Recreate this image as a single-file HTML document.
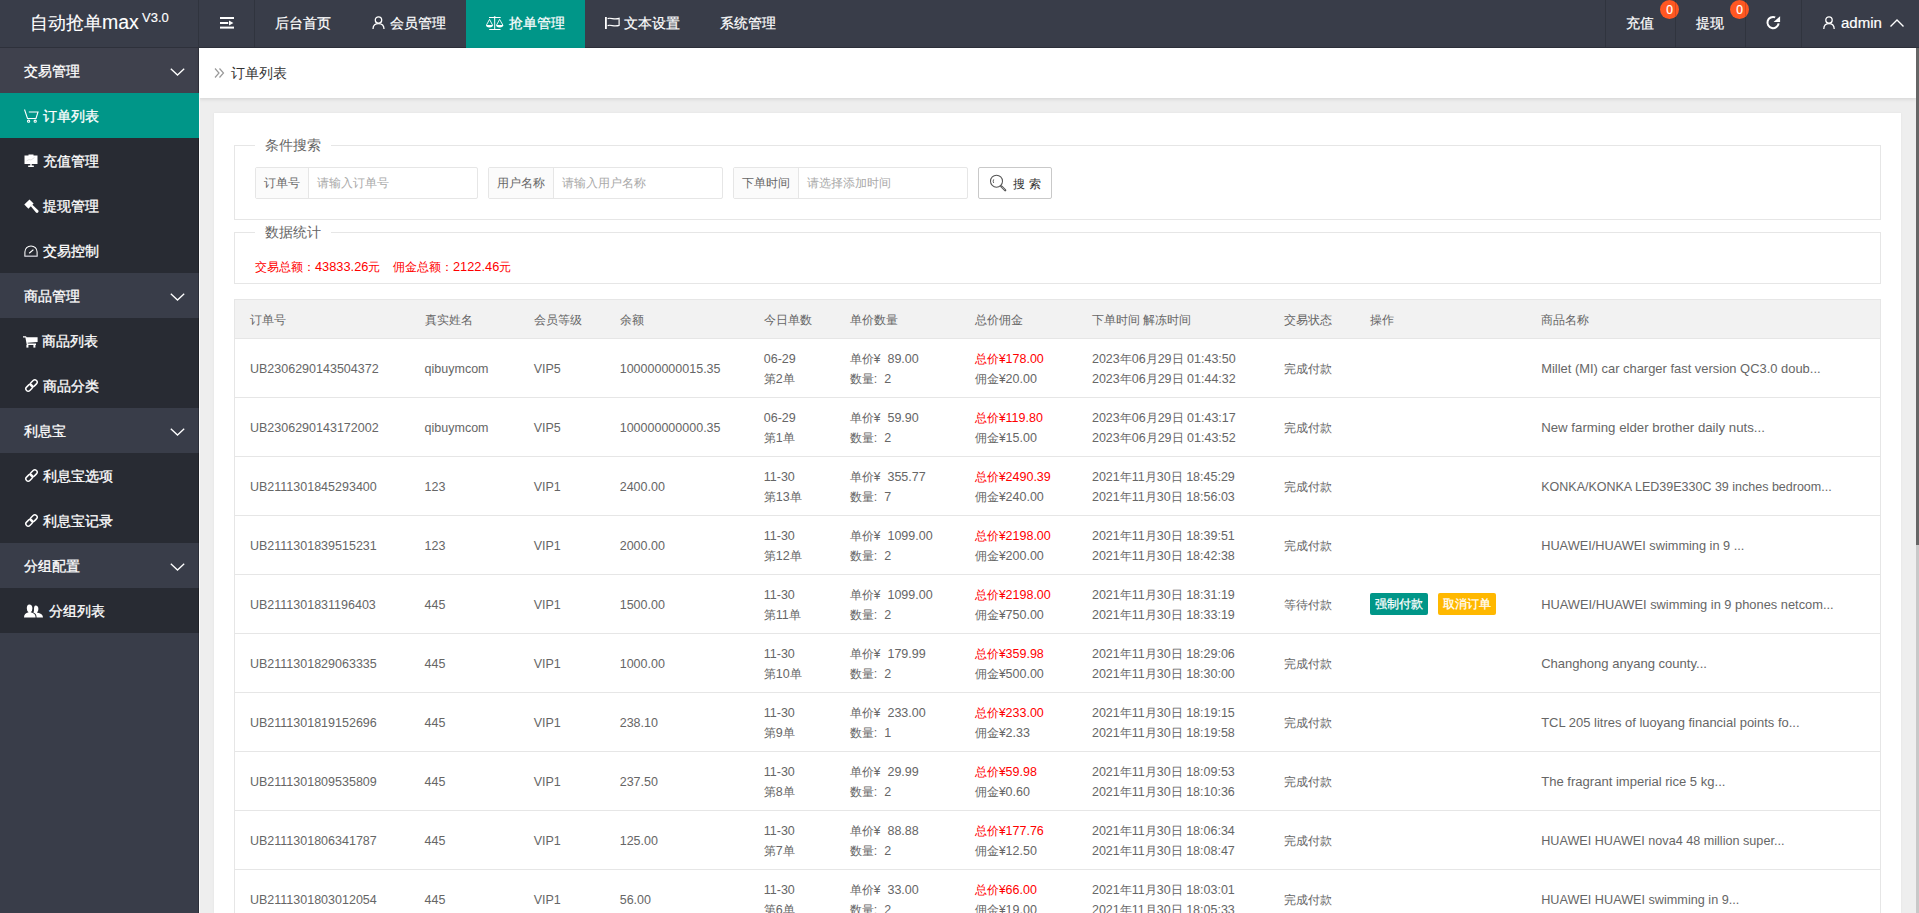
<!DOCTYPE html>
<html><head><meta charset="utf-8">
<style>
*{box-sizing:border-box;margin:0;padding:0}
html,body{width:1919px;height:913px;overflow:hidden;background:#EEEEEE;font-family:"Liberation Sans",sans-serif;color:#666}
.abs{position:absolute}
#hdr{position:absolute;left:0;top:0;width:1919px;height:48px;background:#393D49;border-bottom:1px solid #2E313B}
#hdr .t{position:absolute;top:0;height:47px;line-height:46px;color:#fff;font-size:14px;white-space:nowrap;-webkit-text-stroke:0.2px #fff}
.vd{position:absolute;top:0;width:1px;height:47px;background:rgba(0,0,0,.14);z-index:3}
#side{position:absolute;left:0;top:48px;width:199px;height:865px;background:#393D49}
.mi{position:absolute;left:0;width:199px;height:45px;line-height:46px;color:#fff;font-size:14px;white-space:nowrap;-webkit-text-stroke:0.3px #fff}
.mi.g{background:#393D49}
.mi.c{background:#282B33}
.mi.on{background:#009688}
.mi span{position:absolute;top:0}
.mi svg{position:absolute}
#crumb{position:absolute;left:199px;top:48px;width:1717px;height:50px;background:#fff;box-shadow:0 1px 4px rgba(0,0,0,.12)}
#sb{position:absolute;left:1916px;top:48px;width:3px;height:865px;background:#C8C8C8}
#sb i{position:absolute;left:0;top:0;width:3px;height:497px;background:#666}
#card{position:absolute;left:214px;top:113px;width:1687px;height:800px;background:#fff;box-shadow:0 0 2px rgba(0,0,0,.06)}
.fs{position:absolute;border:1px solid #E6E6E6}
.lg{position:absolute;background:#fff;padding:0 10px;font-size:14px;color:#666;line-height:16px;white-space:nowrap}
.ig{position:absolute;top:167px;height:32px;border:1px solid #E6E6E6;border-radius:2px;font-size:12px;white-space:nowrap}
.ig .l{position:absolute;left:0;top:0;height:30px;line-height:31px;background:#FBFBFB;border-right:1px solid #E6E6E6;color:#666;padding:0 8px}
.ig .p{position:absolute;top:0;height:30px;line-height:31px;color:#A9A9A9}
table{position:absolute;left:234px;top:299px;border-collapse:collapse;table-layout:fixed;width:1647px;border-left:1px solid #E6E6E6;border-right:1px solid #E6E6E6}
th,td{border:0;border-top:1px solid #E6E6E6;border-bottom:1px solid #E6E6E6;text-align:left;padding:0 15px;font-weight:normal;white-space:nowrap;overflow:hidden;color:#666}
th{background:#F2F2F2;height:39px;font-size:12px}
td{height:59px;font-size:12px;line-height:20px;padding-top:2px}
td i{font-style:normal;font-size:12.5px}
td.gd{font-size:12.9px}
th{padding-top:2px}
td .r{color:#FF0000}
.bt{position:relative;top:-1px;display:inline-block;height:22px;line-height:22px;padding:0 5px;color:#fff;font-size:12px;border-radius:2px;margin-right:6px;-webkit-text-stroke:0.25px #fff}
</style></head><body>

<div id="hdr">
  <div class="t" style="left:30px;top:0px;font-size:18px;line-height:44px;-webkit-text-stroke:0.1px #fff">自动抢单<span style="font-size:19.5px">max</span></div><div class="t" style="left:142px;top:12px;font-size:13px;line-height:12px;height:14px;-webkit-text-stroke:0.15px #fff">V3.0</div>
  <div class="vd" style="left:198px"></div>
  <svg class="abs" style="left:220px;top:16px" width="14" height="14" viewBox="0 0 14 14"><rect x="0" y="1" width="14" height="2" fill="#fff"/><rect x="0" y="6" width="8.2" height="2" fill="#fff"/><rect x="0" y="10.6" width="14" height="2" fill="#fff"/><path d="M9 4.4 L13.4 7 L9 9.6Z" fill="#fff"/></svg>
  <div class="vd" style="left:254px"></div>
  <div class="t" style="left:275px">后台首页</div>
  <svg class="abs" style="left:372px;top:16px" width="13" height="13" viewBox="0 0 13 13" fill="none" stroke="#fff" stroke-width="1.3"><circle cx="6.5" cy="4" r="3.2"/><path d="M1 13 C1 9 3.5 7.6 6.5 7.6 C9.5 7.6 12 9 12 13"/></svg>
  <div class="t" style="left:390px">会员管理</div>
  <div class="abs" style="left:466px;top:0;width:119px;height:48px;background:#009688"></div>
  <svg class="abs" style="left:486px;top:16px" width="18" height="14" viewBox="0 0 18 14" fill="none" stroke="#fff" stroke-width="1"><path d="M3 1.5 H14.7 M8.7 1.5 V13.5 M3.2 13.5 H14.5"/><circle cx="8.7" cy="1.2" r="1" fill="#fff" stroke="none"/><path d="M3.5 3.4 L0.4 9.2 M3.5 3.4 L6.6 9.2 M13.6 3.4 L10.5 9.2 M13.6 3.4 L16.9 9.2" stroke-width="0.9"/><path d="M0 9 H7 Q7 11.4 3.5 11.4 Q0 11.4 0 9Z M10.1 9 H17.3 Q17.3 11.4 13.7 11.4 Q10.1 11.4 10.1 9Z" fill="#fff" stroke="none"/></svg>
  <div class="t" style="left:509px">抢单管理</div>
  <svg class="abs" style="left:604px;top:16px" width="17" height="14" viewBox="0 0 17 14" fill="none" stroke="#fff" stroke-width="1.2"><rect x="1" y="1" width="1.8" height="12" fill="#fff" stroke="none"/><path d="M3.6 2.6 C7 1.2 10 4.2 15.1 2.4 V9.4 C10 11.2 7 8.2 3.6 9.6"/></svg>
  <div class="t" style="left:624px">文本设置</div>
  <div class="t" style="left:720px">系统管理</div>

  <div class="vd" style="left:1605px"></div>
  <div class="t" style="left:1626px">充值</div>
  <div class="abs" style="left:1660px;top:0;width:19px;height:19px;border-radius:10px;background:#FF5722;color:#fff;font-size:12px;line-height:20px;text-align:center;-webkit-text-stroke:0.2px #fff">0</div>
  <div class="vd" style="left:1675px"></div>
  <div class="t" style="left:1696px">提现</div>
  <div class="abs" style="left:1730px;top:0;width:19px;height:19px;border-radius:10px;background:#FF5722;color:#fff;font-size:12px;line-height:20px;text-align:center;-webkit-text-stroke:0.2px #fff">0</div>
  <div class="vd" style="left:1745px"></div>
  <svg class="abs" style="left:1765px;top:15px" width="16" height="15" viewBox="0 0 16 15" fill="none" stroke="#fff" stroke-width="2"><path d="M13.6 8.3 A5.6 5.6 0 1 1 10.2 2.4"/><path d="M8.6 7.1 L15.1 1.2 L15.1 7.1Z" fill="#fff" stroke="none"/></svg>
  <div class="vd" style="left:1801px"></div>
  <svg class="abs" style="left:1823px;top:16px" width="12" height="13" viewBox="0 0 12 13" fill="none" stroke="#fff" stroke-width="1.3"><circle cx="6" cy="4" r="3.2"/><path d="M0.8 13 C0.8 9 3 7.6 6 7.6 C9 7.6 11.2 9 11.2 13"/></svg>
  <div class="t" style="left:1841px;font-size:15px">admin</div>
  <svg class="abs" style="left:1890px;top:19px" width="14" height="8" viewBox="0 0 14 8" fill="none" stroke="#fff" stroke-width="1.4"><path d="M0.5 7.5 L7 1 L13.5 7.5"/></svg>
</div>

<div id="side">
<div class="mi g" style="top:0px;background:#3F414D"><span style="left:24px">交易管理</span><svg style="left:170px;top:20px" width="15" height="8" viewBox="0 0 15 8" fill="none" stroke="#fff" stroke-width="1.3"><path d="M0.8 0.8 L7.5 7 L14.2 0.8"/></svg></div>
<div class="abs" style="left:198px;top:0;width:1px;height:865px;background:rgba(0,0,0,.22);z-index:1"></div>
<div class="mi on" style="top:45px;z-index:2"><svg style="left:24px;top:16px" width="15" height="14" viewBox="0 0 15 14" fill="none" stroke="#fff" stroke-width="1.1"><path d="M0.5 0.5 L3.5 9.5 H12 L14 3 H4.8"/><circle cx="4.6" cy="12.2" r="1.1"/><circle cx="11.2" cy="12.2" r="1.1"/></svg><span style="left:43px">订单列表</span></div>
<div class="mi c" style="top:90px"><svg style="left:24px;top:16px" width="14" height="13" viewBox="0 0 14 13"><rect x="0.5" y="1.5" width="13" height="8.5" fill="#fff"/><rect x="4.5" y="0.5" width="5" height="2" fill="#fff"/><rect x="6.3" y="10" width="1.4" height="2" fill="#fff"/><rect x="4" y="11.5" width="6" height="1.5" rx="0.7" fill="#fff"/><path d="M2.5 7 L5 5.5 L7 6 L10.5 3.5" stroke="#ccc" stroke-width="0.6" fill="none"/></svg><span style="left:43px">充值管理</span></div>
<div class="mi c" style="top:135px"><svg style="left:24px;top:16px" width="15" height="15" viewBox="0 0 15 15" fill="#fff"><path d="M0.3 5.6 L5.5 0.4 L9.6 4.5 L4.4 9.7Z"/><path d="M6.6 6.9 L8.1 5.4 L14.4 11.4 Q15 12.2 14.2 13.2 L13.6 13.8 Q12.8 14.4 12 13.6Z"/></svg><span style="left:43px">提现管理</span></div>
<div class="mi c" style="top:180px"><svg style="left:24px;top:17px" width="14" height="12" viewBox="0 0 14 12" fill="none" stroke="#fff" stroke-width="1.05"><path d="M0.9 11.2 V7 A6.1 6.1 0 0 1 13.1 7 V11.2"/><path d="M5.2 8.3 L9.4 4.6" stroke-width="1.2"/><rect x="0.4" y="10.5" width="13.2" height="1.4" fill="#c4c4cc" stroke="none"/></svg><span style="left:43px">交易控制</span></div>
<div class="mi g" style="top:225px"><span style="left:24px">商品管理</span><svg style="left:170px;top:20px" width="15" height="8" viewBox="0 0 15 8" fill="none" stroke="#fff" stroke-width="1.3"><path d="M0.8 0.8 L7.5 7 L14.2 0.8"/></svg></div>
<div class="mi c" style="top:270px"><svg style="left:23px;top:18px" width="15" height="12" viewBox="0 0 15 12" fill="#fff"><path d="M0 0.2 H3 L3.6 1.2 H14.6 V6 L4.6 6.8 L4.8 7.6 H13 V9 H3.8 L2.4 1.6 H0Z"/><rect x="3.4" y="9" width="2" height="2.6"/><rect x="10.4" y="9" width="2" height="2.6"/></svg><span style="left:42px">商品列表</span></div>
<div class="mi c" style="top:315px"><svg style="left:24px;top:15px" width="16" height="16" viewBox="0 0 16 16" fill="none" stroke="#fff" stroke-width="1.5"><rect x="1.45" y="7.45" width="7.5" height="4.7" rx="2.35" transform="rotate(-45 5.2 9.8)"/><rect x="6.05" y="2.85" width="7.5" height="4.7" rx="2.35" transform="rotate(-45 9.8 5.2)"/></svg><span style="left:43px">商品分类</span></div>
<div class="mi g" style="top:360px"><span style="left:24px">利息宝</span><svg style="left:170px;top:20px" width="15" height="8" viewBox="0 0 15 8" fill="none" stroke="#fff" stroke-width="1.3"><path d="M0.8 0.8 L7.5 7 L14.2 0.8"/></svg></div>
<div class="mi c" style="top:405px"><svg style="left:24px;top:15px" width="16" height="16" viewBox="0 0 16 16" fill="none" stroke="#fff" stroke-width="1.5"><rect x="1.45" y="7.45" width="7.5" height="4.7" rx="2.35" transform="rotate(-45 5.2 9.8)"/><rect x="6.05" y="2.85" width="7.5" height="4.7" rx="2.35" transform="rotate(-45 9.8 5.2)"/></svg><span style="left:43px">利息宝选项</span></div>
<div class="mi c" style="top:450px"><svg style="left:24px;top:15px" width="16" height="16" viewBox="0 0 16 16" fill="none" stroke="#fff" stroke-width="1.5"><rect x="1.45" y="7.45" width="7.5" height="4.7" rx="2.35" transform="rotate(-45 5.2 9.8)"/><rect x="6.05" y="2.85" width="7.5" height="4.7" rx="2.35" transform="rotate(-45 9.8 5.2)"/></svg><span style="left:43px">利息宝记录</span></div>
<div class="mi g" style="top:495px"><span style="left:24px">分组配置</span><svg style="left:170px;top:20px" width="15" height="8" viewBox="0 0 15 8" fill="none" stroke="#fff" stroke-width="1.3"><path d="M0.8 0.8 L7.5 7 L14.2 0.8"/></svg></div>
<div class="mi c" style="top:540px"><svg style="left:24px;top:16px" width="20" height="14" viewBox="0 0 20 14" fill="#fff"><path d="M5.3 0.5 Q8.4 0.5 8.4 4.3 Q8.4 7.3 6.7 8.2 Q11.6 9.1 11.6 13.6 H0 Q0 9.1 4.6 8.2 Q2.8 7.3 2.8 4.3 Q2.8 0.5 5.3 0.5Z"/><path d="M11.5 1.5 Q14.4 1.5 14.4 5 Q14.4 7.6 12.9 8.4 Q19 9.3 19 13.6 H12.6 Q12.6 9.6 9.4 8.6 Q10.2 7.8 10 5 Q10 1.5 11.5 1.5Z"/></svg><span style="left:49px">分组列表</span></div>
</div>

<div id="crumb">
  <svg class="abs" style="left:15px;top:20px" width="11" height="10" viewBox="0 0 11 10" fill="none" stroke="#999" stroke-width="1.2"><path d="M1 0.5 L5 5 L1 9.5 M5.5 0.5 L9.5 5 L5.5 9.5"/></svg>
  <div class="abs" style="left:32px;top:17px;font-size:14px;line-height:16px;color:#333">订单列表</div>
</div>
<div id="sb"><i></i></div>
<div class="abs" style="left:199px;top:98px;width:1px;height:815px;background:#FAFAFA"></div>

<div id="card"></div>

<div class="fs" style="left:234px;top:145px;width:1647px;height:75px"></div>
<div class="lg" style="left:255px;top:137px">条件搜索</div>
<div class="ig" style="left:255px;width:223px"><div class="l">订单号</div><div class="p" style="left:61px">请输入订单号</div></div>
<div class="ig" style="left:488px;width:235px"><div class="l">用户名称</div><div class="p" style="left:73px">请输入用户名称</div></div>
<div class="ig" style="left:733px;width:235px"><div class="l">下单时间</div><div class="p" style="left:73px">请选择添加时间</div></div>
<div class="abs" style="left:978px;top:167px;width:74px;height:32px;border:1px solid #C9C9C9;border-radius:2px;background:#fff"></div>
<svg class="abs" style="left:989px;top:174px" width="18" height="18" viewBox="0 0 18 18" fill="none" stroke="#555" stroke-width="1.05"><circle cx="7.5" cy="7.2" r="6"/><path d="M4.7 5.4 A3.3 3.3 0 0 0 4.7 9" stroke-width="0.9"/><path d="M12.2 12.3 L16.2 16.3" stroke-width="2.2" stroke-linecap="round"/><path d="M12.6 12.7 L15.8 15.9" stroke="#fff" stroke-width="0.5"/></svg>
<div class="abs" style="left:1013px;top:177px;font-size:12px;line-height:14px;color:#333;letter-spacing:4px;white-space:nowrap">搜索</div>

<div class="fs" style="left:234px;top:232px;width:1647px;height:52px"></div>
<div class="lg" style="left:255px;top:224px">数据统计</div>
<div class="abs" style="left:255px;top:259px;font-size:12px;line-height:16px;color:#FF0000;white-space:nowrap">交易总额：<span style="font-size:12.8px">43833.26</span>元</div>
<div class="abs" style="left:393px;top:259px;font-size:12px;line-height:16px;color:#FF0000;white-space:nowrap">佣金总额：<span style="font-size:12.8px">2122.46</span>元</div>
<table><colgroup><col style="width:175px"><col style="width:109px"><col style="width:86px"><col style="width:144px"><col style="width:86px"><col style="width:125px"><col style="width:117px"><col style="width:192px"><col style="width:86px"><col style="width:171px"><col style="width:354px"></colgroup>
<tr><th>订单号</th><th>真实姓名</th><th>会员等级</th><th>余额</th><th>今日单数</th><th>单价数量</th><th>总价佣金</th><th>下单时间 解冻时间</th><th>交易状态</th><th>操作</th><th>商品名称</th></tr>
<tr><td><i>UB2306290143504372</i></td><td><i>qibuymcom</i></td><td><i>VIP5</i></td><td><i>100000000015.35</i></td><td><i>06-29</i><br>第<i>2</i>单</td><td>单价¥<i>&nbsp; 89.00</i><br>数量<i>:&nbsp;&nbsp;2</i></td><td><span class="r">总价¥<i>178.00</i></span><br>佣金¥<i>20.00</i></td><td><i>2023</i>年<i>06</i>月<i>29</i>日<i>&nbsp;01:43:50</i><br><i>2023</i>年<i>06</i>月<i>29</i>日<i>&nbsp;01:44:32</i></td><td>完成付款</td><td></td><td class="gd" style="font-size:12.93px">Millet (MI) car charger fast version QC3.0 doub...</td></tr>
<tr><td><i>UB2306290143172002</i></td><td><i>qibuymcom</i></td><td><i>VIP5</i></td><td><i>100000000000.35</i></td><td><i>06-29</i><br>第<i>1</i>单</td><td>单价¥<i>&nbsp; 59.90</i><br>数量<i>:&nbsp;&nbsp;2</i></td><td><span class="r">总价¥<i>119.80</i></span><br>佣金¥<i>15.00</i></td><td><i>2023</i>年<i>06</i>月<i>29</i>日<i>&nbsp;01:43:17</i><br><i>2023</i>年<i>06</i>月<i>29</i>日<i>&nbsp;01:43:52</i></td><td>完成付款</td><td></td><td class="gd" style="font-size:13.24px">New farming elder brother daily nuts...</td></tr>
<tr><td><i>UB2111301845293400</i></td><td><i>123</i></td><td><i>VIP1</i></td><td><i>2400.00</i></td><td><i>11-30</i><br>第<i>13</i>单</td><td>单价¥<i>&nbsp; 355.77</i><br>数量<i>:&nbsp;&nbsp;7</i></td><td><span class="r">总价¥<i>2490.39</i></span><br>佣金¥<i>240.00</i></td><td><i>2021</i>年<i>11</i>月<i>30</i>日<i>&nbsp;18:45:29</i><br><i>2021</i>年<i>11</i>月<i>30</i>日<i>&nbsp;18:56:03</i></td><td>完成付款</td><td></td><td class="gd" style="font-size:12.51px">KONKA/KONKA LED39E330C 39 inches bedroom...</td></tr>
<tr><td><i>UB2111301839515231</i></td><td><i>123</i></td><td><i>VIP1</i></td><td><i>2000.00</i></td><td><i>11-30</i><br>第<i>12</i>单</td><td>单价¥<i>&nbsp; 1099.00</i><br>数量<i>:&nbsp;&nbsp;2</i></td><td><span class="r">总价¥<i>2198.00</i></span><br>佣金¥<i>200.00</i></td><td><i>2021</i>年<i>11</i>月<i>30</i>日<i>&nbsp;18:39:51</i><br><i>2021</i>年<i>11</i>月<i>30</i>日<i>&nbsp;18:42:38</i></td><td>完成付款</td><td></td><td class="gd" style="font-size:12.75px">HUAWEI/HUAWEI swimming in 9 ...</td></tr>
<tr><td><i>UB2111301831196403</i></td><td><i>445</i></td><td><i>VIP1</i></td><td><i>1500.00</i></td><td><i>11-30</i><br>第<i>11</i>单</td><td>单价¥<i>&nbsp; 1099.00</i><br>数量<i>:&nbsp;&nbsp;2</i></td><td><span class="r">总价¥<i>2198.00</i></span><br>佣金¥<i>750.00</i></td><td><i>2021</i>年<i>11</i>月<i>30</i>日<i>&nbsp;18:31:19</i><br><i>2021</i>年<i>11</i>月<i>30</i>日<i>&nbsp;18:33:19</i></td><td>等待付款</td><td><span class="bt" style="background:#009688">强制付款</span><span class="bt" style="background:#FFB800;margin-left:4px">取消订单</span></td><td class="gd" style="font-size:12.85px">HUAWEI/HUAWEI swimming in 9 phones netcom...</td></tr>
<tr><td><i>UB2111301829063335</i></td><td><i>445</i></td><td><i>VIP1</i></td><td><i>1000.00</i></td><td><i>11-30</i><br>第<i>10</i>单</td><td>单价¥<i>&nbsp; 179.99</i><br>数量<i>:&nbsp;&nbsp;2</i></td><td><span class="r">总价¥<i>359.98</i></span><br>佣金¥<i>500.00</i></td><td><i>2021</i>年<i>11</i>月<i>30</i>日<i>&nbsp;18:29:06</i><br><i>2021</i>年<i>11</i>月<i>30</i>日<i>&nbsp;18:30:00</i></td><td>完成付款</td><td></td><td class="gd" style="font-size:13.04px">Changhong anyang county...</td></tr>
<tr><td><i>UB2111301819152696</i></td><td><i>445</i></td><td><i>VIP1</i></td><td><i>238.10</i></td><td><i>11-30</i><br>第<i>9</i>单</td><td>单价¥<i>&nbsp; 233.00</i><br>数量<i>:&nbsp;&nbsp;1</i></td><td><span class="r">总价¥<i>233.00</i></span><br>佣金¥<i>2.33</i></td><td><i>2021</i>年<i>11</i>月<i>30</i>日<i>&nbsp;18:19:15</i><br><i>2021</i>年<i>11</i>月<i>30</i>日<i>&nbsp;18:19:58</i></td><td>完成付款</td><td></td><td class="gd" style="font-size:12.97px">TCL 205 litres of luoyang financial points fo...</td></tr>
<tr><td><i>UB2111301809535809</i></td><td><i>445</i></td><td><i>VIP1</i></td><td><i>237.50</i></td><td><i>11-30</i><br>第<i>8</i>单</td><td>单价¥<i>&nbsp; 29.99</i><br>数量<i>:&nbsp;&nbsp;2</i></td><td><span class="r">总价¥<i>59.98</i></span><br>佣金¥<i>0.60</i></td><td><i>2021</i>年<i>11</i>月<i>30</i>日<i>&nbsp;18:09:53</i><br><i>2021</i>年<i>11</i>月<i>30</i>日<i>&nbsp;18:10:36</i></td><td>完成付款</td><td></td><td class="gd" style="font-size:13.05px">The fragrant imperial rice 5 kg...</td></tr>
<tr><td><i>UB2111301806341787</i></td><td><i>445</i></td><td><i>VIP1</i></td><td><i>125.00</i></td><td><i>11-30</i><br>第<i>7</i>单</td><td>单价¥<i>&nbsp; 88.88</i><br>数量<i>:&nbsp;&nbsp;2</i></td><td><span class="r">总价¥<i>177.76</i></span><br>佣金¥<i>12.50</i></td><td><i>2021</i>年<i>11</i>月<i>30</i>日<i>&nbsp;18:06:34</i><br><i>2021</i>年<i>11</i>月<i>30</i>日<i>&nbsp;18:08:47</i></td><td>完成付款</td><td></td><td class="gd" style="font-size:12.63px">HUAWEI HUAWEI nova4 48 million super...</td></tr>
<tr><td><i>UB2111301803012054</i></td><td><i>445</i></td><td><i>VIP1</i></td><td><i>56.00</i></td><td><i>11-30</i><br>第<i>6</i>单</td><td>单价¥<i>&nbsp; 33.00</i><br>数量<i>:&nbsp;&nbsp;2</i></td><td><span class="r">总价¥<i>66.00</i></span><br>佣金¥<i>19.00</i></td><td><i>2021</i>年<i>11</i>月<i>30</i>日<i>&nbsp;18:03:01</i><br><i>2021</i>年<i>11</i>月<i>30</i>日<i>&nbsp;18:05:33</i></td><td>完成付款</td><td></td><td class="gd" style="font-size:12.67px">HUAWEI HUAWEI swimming in 9...</td></tr>
</table>


</body></html>
